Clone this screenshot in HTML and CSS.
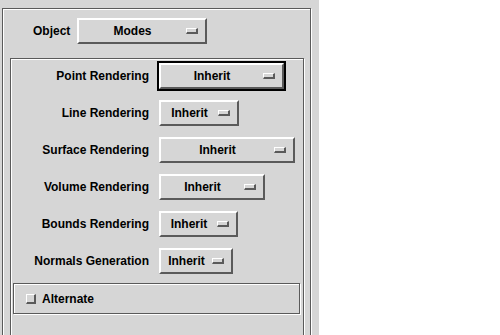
FILE: index.html
```html
<!DOCTYPE html>
<html>
<head>
<meta charset="utf-8">
<link rel="stylesheet" href="styles.css">
</head>
<body>
<div class="panel">
  <div class="frame outer">
    <div class="object-row">
      <span class="object-label">Object</span>
      <div class="opt w-modes"><span class="opt-text">Modes</span><span class="ind"></span></div>
    </div>
    <div class="frame inner">
      <div class="rows">
        <span class="lbl">Point Rendering</span>
        <div class="opt w-point focused"><span class="opt-text">Inherit</span><span class="ind"></span></div>
        <span class="lbl">Line Rendering</span>
        <div class="opt w-line"><span class="opt-text">Inherit</span><span class="ind"></span></div>
        <span class="lbl">Surface Rendering</span>
        <div class="opt w-surface"><span class="opt-text">Inherit</span><span class="ind"></span></div>
        <span class="lbl">Volume Rendering</span>
        <div class="opt w-volume"><span class="opt-text">Inherit</span><span class="ind"></span></div>
        <span class="lbl">Bounds Rendering</span>
        <div class="opt w-bounds"><span class="opt-text">Inherit</span><span class="ind"></span></div>
        <span class="lbl">Normals Generation</span>
        <div class="opt w-normals"><span class="opt-text">Inherit</span><span class="ind"></span></div>
      </div>
      <div class="frame alt-box">
        <span class="check"></span>
        <span class="alt-label">Alternate</span>
      </div>
    </div>
  </div>
</div>
</body>
</html>
```
FILE: styles.css
```css
html, body {
  margin: 0;
  padding: 0;
  background: #ffffff;
}
body {
  width: 500px;
  height: 335px;
  overflow: hidden;
  font-family: "Liberation Sans", Arial, sans-serif;
  font-weight: bold;
  font-size: 12px;
  color: #000;
}
.panel {
  width: 319px;
  height: 335px;
  box-sizing: border-box;
  background: #d6d6d6;
  padding-top: 8px;
  padding-left: 2px;
  overflow: hidden;
}
.frame {
  box-sizing: border-box;
  border: 1px solid #5a5a5a;
  box-shadow: inset 1px 1px 0 #ffffff, 1px 1px 0 #ffffff;
}
.outer {
  width: 309px;
  height: 420px;
  padding-top: 7px;
}
.object-row {
  display: flex;
  align-items: center;
  height: 30px;
  padding-left: 30px;
}
.object-label {
  width: 42px;
  line-height: 14px;
}
.inner {
  margin-top: 12px;
  margin-left: 7px;
  width: 294px;
  height: 400px;
  padding-top: 2px;
}
.rows {
  display: grid;
  grid-template-columns: 138px auto;
  column-gap: 8px;
  row-gap: 7px;
  grid-auto-rows: 30px;
  align-items: center;
  justify-items: start;
}
.lbl {
  justify-self: end;
  line-height: 14px;
}
.opt {
  box-sizing: border-box;
  margin: 2px;
  height: 26px;
  display: flex;
  align-items: center;
  padding-right: 7px;
  background: #d6d6d6;
  border: 2px solid;
  border-color: #ffffff #5a5a5a #5a5a5a #ffffff;
}
.opt.focused {
  outline: 2px solid #000000;
}
.opt-text {
  flex: 1;
  text-align: center;
  line-height: 14px;
  white-space: nowrap;
}
.ind {
  box-sizing: border-box;
  width: 12px;
  height: 6px;
  border-style: solid;
  border-width: 1px 2px 2px 1px;
  border-color: #ffffff #5a5a5a #5a5a5a #ffffff;
}
.w-modes { width: 130px; }
.w-point { width: 125px; }
.w-line { width: 80px; }
.w-surface { width: 136px; }
.w-volume { width: 106px; }
.w-bounds { width: 79px; }
.w-normals { width: 74px; }
.alt-box {
  margin-top: 7px;
  margin-left: 2px;
  width: 287px;
  height: 31px;
  display: flex;
  align-items: center;
  padding-left: 12px;
}
.check {
  box-sizing: border-box;
  width: 10px;
  height: 10px;
  border-style: solid;
  border-width: 1px 2px 2px 1px;
  border-color: #ffffff #5a5a5a #5a5a5a #ffffff;
}
.alt-label {
  margin-left: 6px;
  line-height: 14px;
}
```
